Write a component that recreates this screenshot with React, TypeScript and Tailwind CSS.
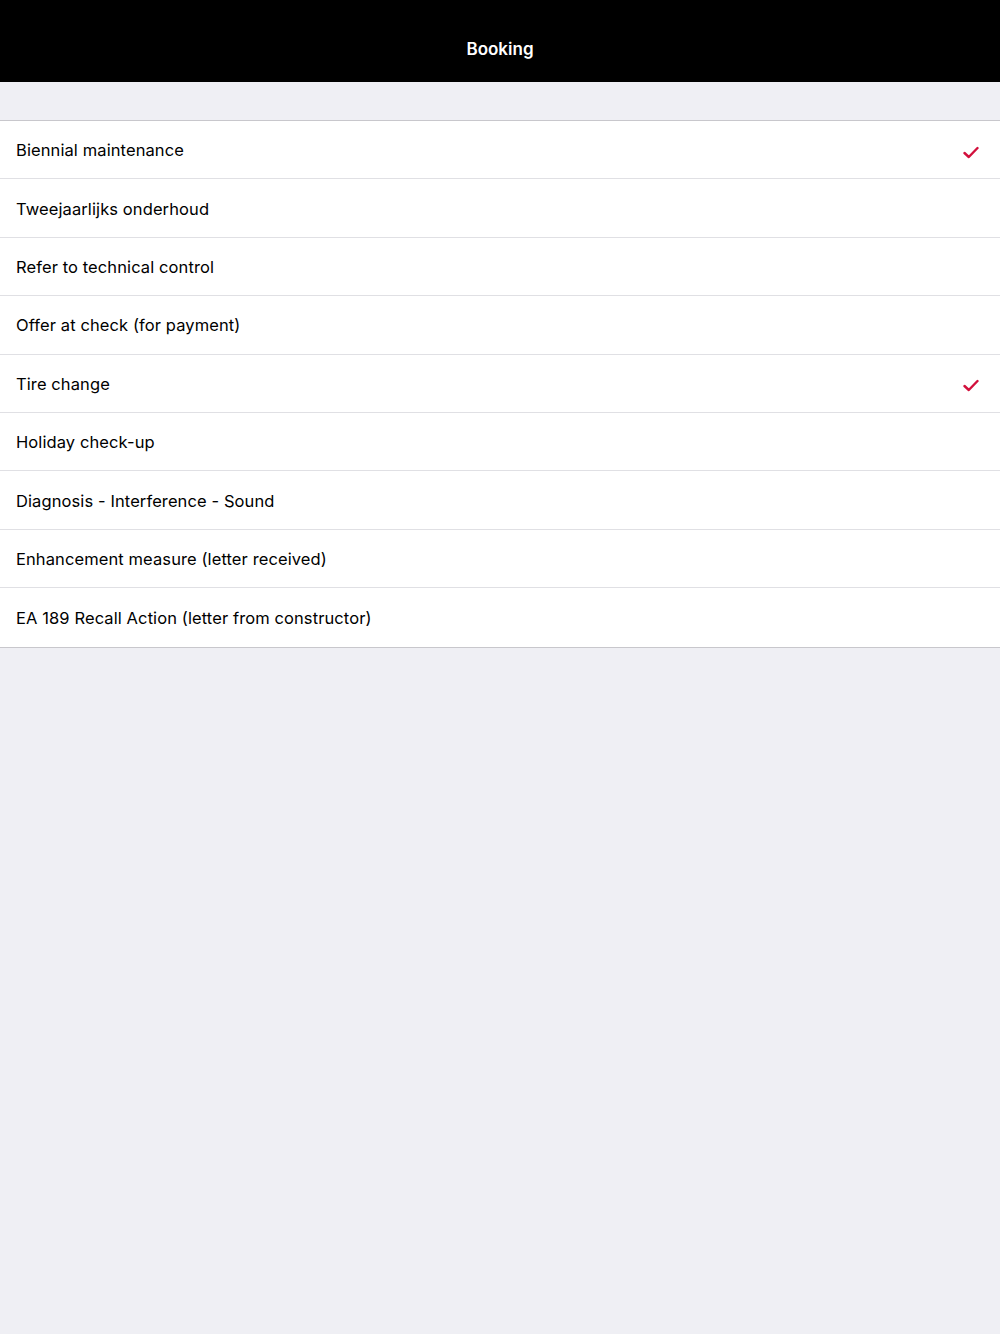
import React from "react";

const items: { label: string; checked: boolean }[] = [
  { label: "Biennial maintenance", checked: true },
  { label: "Tweejaarlijks onderhoud", checked: false },
  { label: "Refer to technical control", checked: false },
  { label: "Offer at check (for payment)", checked: false },
  { label: "Tire change", checked: true },
  { label: "Holiday check-up", checked: false },
  { label: "Diagnosis - Interference - Sound", checked: false },
  { label: "Enhancement measure (letter received)", checked: false },
  { label: "EA 189 Recall Action (letter from constructor)", checked: false },
];

function Check() {
  return (
    <svg width="16" height="13" viewBox="0 0 16 13" fill="none" className="mt-[3px]">
      <path d="M1.5 7 L5.8 11 L14.5 2" stroke="#d2103c" strokeWidth="2.4" strokeLinecap="round" strokeLinejoin="round" />
    </svg>
  );
}

export default function App() {
  return (
    <div className="w-[1000px] h-[1334px] bg-[#efeff4] flex flex-col" style={{ fontFamily: "Inter, 'Noto Sans', sans-serif" }}>
      <div className="h-[82px] bg-black flex items-center justify-center pt-[18px]">
        <span className="text-white text-[17px] font-semibold">Booking</span>
      </div>
      <div className="h-[38px]" />
      <div className="bg-white border-t border-b border-[#c8c7cc]">
        {items.map((it, i) => (
          <div
            key={i}
            className={`h-[58.4px] flex items-center justify-between pl-4 pr-[21px] pt-[2px] ${i < items.length - 1 ? "border-b border-[#e0e0e4]" : ""}`}
          >
            <span className="text-[16.5px] text-black tracking-[0.1px]">{it.label}</span>
            {it.checked && <Check />}
          </div>
        ))}
      </div>
    </div>
  );
}
